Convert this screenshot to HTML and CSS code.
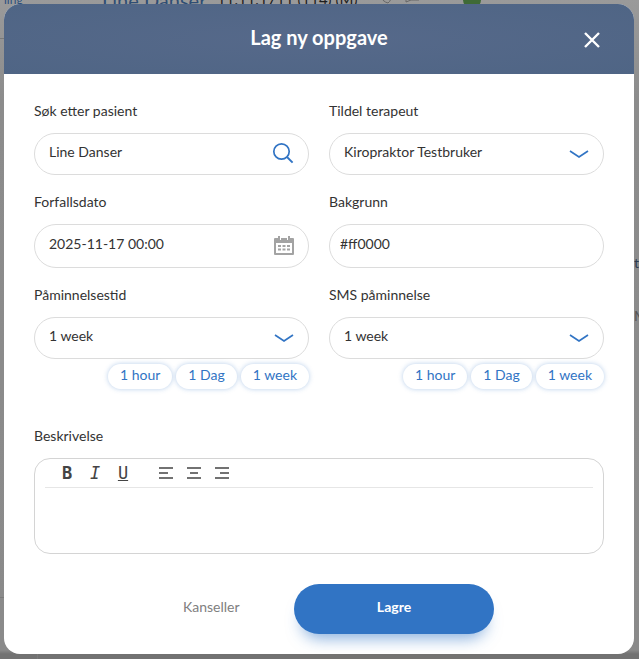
FILE: index.html
```html
<!DOCTYPE html>
<html lang="en">
  <head>
    <meta charset="UTF-8" />
    <meta name="viewport" content="width=device-width, initial-scale=1.0" />
    <title>Lag ny oppgave</title>
    <link rel="stylesheet" href="styles.css">
  </head>
  <body>
    <!-- Page behind the dimmed overlay -->
    <div class="page-behind">
      <span class="behind-link">ling</span>
      <span class="behind-name">Line Danser</span>
      <span class="behind-date">11.11.1711 (114) (M)</span>
      <svg class="behind-icons" width="76" height="10" viewBox="0 0 76 10">
        <path d="M1 0 Q6 8 11 9 Q15 6 14 0 M29 0 V8 L34 6 H42 V0 M57 0 V5 H75 V0" stroke="#666" stroke-width="1" fill="none" />
      </svg>
      <span class="behind-dot"></span>
    </div>
    <span class="behind-line line-a"></span>
    <span class="behind-line line-b"></span>
    <span class="behind-line line-c"></span>
    <span class="behind-char char-t">t</span>
    <span class="behind-char char-m">M</span>

    <div class="modal">
      <div class="modal-header">
        <h2>Lag ny oppgave</h2>
        <svg class="close-icon" width="16" height="16" viewBox="0 0 16 16">
          <path d="M1 1 L15 15 M15 1 L1 15" stroke="#fff" stroke-width="2.4" fill="none" />
        </svg>
      </div>

      <form class="modal-body">
        <div class="form-grid">
          <div class="form-group">
            <label>Søk etter pasient</label>
            <div class="field">
              <span>Line Danser</span>
              <svg class="search-icon" width="22" height="22" viewBox="0 0 22 22">
                <circle cx="9.5" cy="9.5" r="7.7" stroke="#3174c4" stroke-width="1.7" fill="none" />
                <path d="M15 15 L20.6 20.6" stroke="#3174c4" stroke-width="1.9" fill="none" />
              </svg>
            </div>
          </div>

          <div class="form-group">
            <label>Tildel terapeut</label>
            <div class="field">
              <span>Kiropraktor Testbruker</span>
              <svg class="chevron" width="20" height="9" viewBox="0 0 20 9">
                <path d="M1 1 L10 7 L19 1" stroke="#3174c4" stroke-width="1.7" fill="none" />
              </svg>
            </div>
          </div>

          <div class="form-group">
            <label>Forfallsdato</label>
            <div class="field tall">
              <span>2025-11-17 00:00</span>
              <svg class="calendar-icon" width="20" height="20" viewBox="0 0 20 20">
                <path fill="#a3a3a3" fill-rule="evenodd" d="M1 3 H4 V1 H6 V5 H7 V3 H13 V5 H14 V1 H16 V3 H19 Q20 3 20 4 V19 Q20 20 19 20 H1 Q0 20 0 19 V4 Q0 3 1 3 Z M2 8 V18 H18 V8 Z" />
                <path fill="#a3a3a3" d="M4 10 H7 V12 H4 Z M8.5 10 H11.5 V12 H8.5 Z M13 10 H16 V12 H13 Z M4 13.5 H7 V15.5 H4 Z M8.5 13.5 H11.5 V15.5 H8.5 Z M13 13.5 H16 V15.5 H13 Z" />
              </svg>
            </div>
          </div>

          <div class="form-group">
            <label>Bakgrunn</label>
            <div class="field tall flush">
              <span>#ff0000</span>
            </div>
          </div>

          <div class="form-group">
            <label>Påminnelsestid</label>
            <div class="field">
              <span>1 week</span>
              <svg class="chevron" width="20" height="9" viewBox="0 0 20 9">
                <path d="M1 1 L10 7 L19 1" stroke="#3174c4" stroke-width="1.7" fill="none" />
              </svg>
            </div>
            <div class="chips">
              <span class="chip">1 hour</span>
              <span class="chip">1 Dag</span>
              <span class="chip">1 week</span>
            </div>
          </div>

          <div class="form-group">
            <label>SMS påminnelse</label>
            <div class="field">
              <span>1 week</span>
              <svg class="chevron" width="20" height="9" viewBox="0 0 20 9">
                <path d="M1 1 L10 7 L19 1" stroke="#3174c4" stroke-width="1.7" fill="none" />
              </svg>
            </div>
            <div class="chips">
              <span class="chip">1 hour</span>
              <span class="chip">1 Dag</span>
              <span class="chip">1 week</span>
            </div>
          </div>
        </div>

        <div class="description">
          <label>Beskrivelse</label>
          <div class="editor">
            <div class="toolbar">
              <div class="tool-set">
                <span class="tool tool-b">B</span>
                <span class="tool tool-i">I</span>
                <span class="tool tool-u">U</span>
              </div>
              <div class="tool-set">
                <svg class="align-icon" width="14" height="12" viewBox="0 0 14 12">
                  <path d="M0 1 H14 M0 6 H9 M0 11 H14" stroke="#444" stroke-width="1.6" fill="none" />
                </svg>
                <svg class="align-icon" width="14" height="12" viewBox="0 0 14 12">
                  <path d="M0 1 H14 M3 6 H11 M0 11 H14" stroke="#444" stroke-width="1.6" fill="none" />
                </svg>
                <svg class="align-icon" width="14" height="12" viewBox="0 0 14 12">
                  <path d="M0 1 H14 M5 6 H14 M0 11 H14" stroke="#444" stroke-width="1.6" fill="none" />
                </svg>
              </div>
            </div>
          </div>
        </div>

        <div class="actions">
          <span class="cancel">Kanseller</span>
          <button type="button">Lagre</button>
        </div>
      </form>
    </div>
  </body>
</html>
```

FILE: styles.css
```css
html,
body {
  height: 100%;
}
body {
  margin: 0;
  background: linear-gradient(#9a9a9a 0, #8c8c8c 100px, #8a8a8a 650px, #727272 654px);
  font-family: Lato, "Open Sans", sans-serif;
  color: #333;
  overflow: hidden;
}
.page-behind {
  display: flex;
  align-items: flex-end;
  height: 4px;
  white-space: nowrap;
}
.behind-link {
  width: 20px;
  margin-left: 4px;
  font-size: 12px;
  line-height: 9px;
  color: #2b4f7e;
}
.behind-name {
  width: 102px;
  margin-left: 78px;
  font-size: 20px;
  line-height: 8px;
  color: #2e4d74;
}
.behind-date {
  width: 146px;
  margin-left: 13px;
  font-size: 15px;
  line-height: 10px;
  color: #1d1d1d;
}
.behind-icons {
  flex: none;
  margin-left: 14px;
}
.behind-dot {
  flex: none;
  width: 18px;
  height: 18px;
  margin-left: 10px;
  margin-bottom: -5px;
  border-radius: 50%;
  background: #3f6a36;
}
.behind-line {
  position: absolute;
  background: #7a7a7a;
}
.line-a {
  left: 0;
  top: 38px;
  width: 4px;
  height: 1px;
}
.line-b {
  left: 0;
  top: 597px;
  width: 4px;
  height: 1px;
}
.line-c {
  left: 37px;
  top: 654px;
  width: 1px;
  height: 5px;
}
.behind-char {
  position: absolute;
  left: 634px;
  font-size: 14px;
  line-height: 14px;
  color: #2b3a4e;
}
.char-t {
  top: 256px;
}
.char-m {
  top: 309px;
  color: #555;
}

.modal {
  position: absolute;
  left: 4px;
  top: 4px;
  width: 630px;
  height: 650px;
  background: white;
  border-radius: 16px;
  overflow: hidden;
}
.modal-header {
  display: flex;
  align-items: center;
  justify-content: center;
  position: relative;
  height: 70px;
  background: radial-gradient(ellipse at center, #56698a 0%, #4f6585 100%);
}
.modal-header h2 {
  margin: 0;
  padding-bottom: 4px;
  font-size: 20px;
  font-weight: 700;
  color: white;
}
.close-icon {
  position: absolute;
  right: 34px;
  top: 28px;
}

.modal-body {
  padding: 26px 30px 0;
}
.form-grid {
  display: grid;
  grid-template-columns: 275px 275px;
  column-gap: 20px;
}
.form-group {
  margin-bottom: 16px;
}
label {
  display: block;
  height: 22px;
  margin-bottom: 11px;
  font-size: 14px;
  line-height: 22px;
  color: #333;
}
.field {
  display: flex;
  align-items: center;
  justify-content: space-between;
  box-sizing: border-box;
  height: 42px;
  padding: 0 14px 6px 14px;
  border: 1px solid #dcdcdc;
  border-radius: 22px;
  font-size: 14px;
}
.tall {
  height: 44px;
  padding-bottom: 5px;
}
.flush {
  padding-left: 10px;
}
.search-icon {
  margin-top: 4px;
}
.chevron {
  margin-top: 6px;
}
.calendar-icon {
  margin-top: 3px;
}
.chips {
  display: flex;
  justify-content: flex-end;
  gap: 4px;
  margin-top: 5px;
  margin-bottom: 21px;
}
.chip {
  padding: 0 12px;
  height: 25px;
  line-height: 22px;
  border-radius: 13px;
  background: white;
  box-shadow: 0 0 5px rgba(49, 116, 196, 0.35);
  font-size: 14px;
  color: #3174c4;
}

.description {
  margin-top: -1px;
}
.editor {
  box-sizing: border-box;
  height: 96px;
  padding: 0 10px;
  border: 1px solid #d4d4d4;
  border-radius: 16px;
}
.toolbar {
  display: flex;
  align-items: center;
  gap: 29px;
  box-sizing: border-box;
  height: 29px;
  padding-left: 15px;
  padding-bottom: 1px;
  border-bottom: 1px solid #e6e6e6;
}
.tool-set {
  display: flex;
  align-items: center;
  gap: 14px;
}
.tool {
  width: 14px;
  text-align: center;
  font-family: "DejaVu Sans Mono", monospace;
  font-size: 17px;
  color: #444;
}
.tool-b {
  font-weight: 700;
}
.tool-i {
  font-style: italic;
}
.tool-u {
  text-decoration: underline;
}

.actions {
  display: flex;
  align-items: center;
  margin-top: 30px;
}
.cancel {
  width: 260px;
  padding-left: 149px;
  padding-bottom: 6px;
  box-sizing: border-box;
  font-size: 14px;
  color: #808080;
}
button {
  width: 200px;
  height: 50px;
  padding: 0 0 5px;
  border: none;
  border-radius: 25px;
  background: #3174c4;
  box-shadow: 0 12px 16px -8px rgba(49, 116, 196, 0.6);
  font-family: Lato, sans-serif;
  font-size: 14px;
  font-weight: 700;
  color: white;
  cursor: pointer;
}
```
